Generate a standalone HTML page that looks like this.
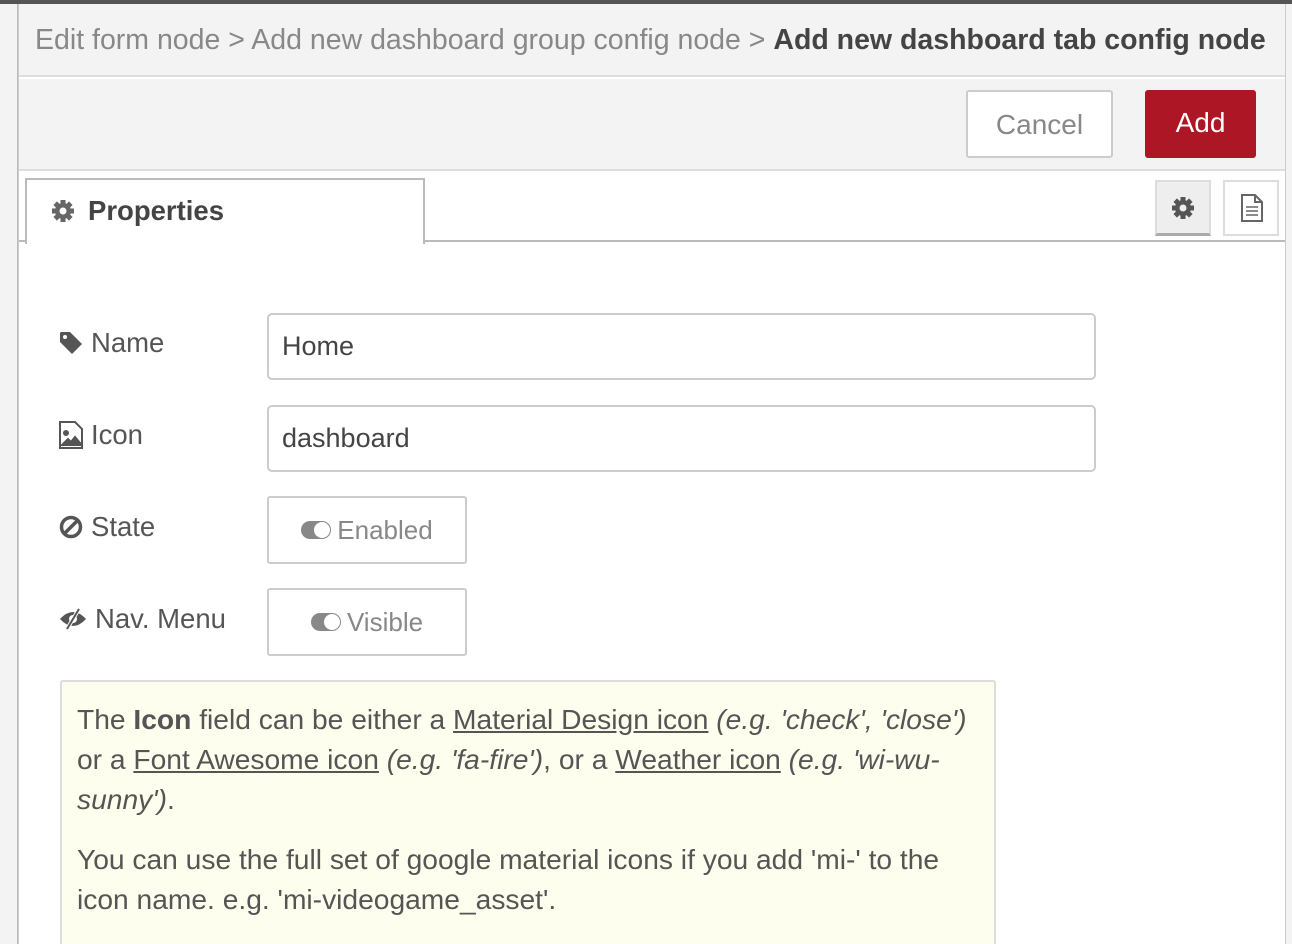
<!DOCTYPE html>
<html><head><style>
*{box-sizing:border-box;margin:0;padding:0}
html,body{width:1292px;height:944px;overflow:hidden}
body{background:#c8c8c8;font-family:"Liberation Sans",Arial,sans-serif;position:relative;color:#555}
.top{position:absolute;left:0;top:0;width:1292px;height:4px;background:#555}
.leftstrip{position:absolute;left:0;top:4px;width:18px;height:940px;background:#f3f3f3;border-right:1px solid #bbb}
.panel{position:absolute;left:18px;top:4px;width:1268px;height:940px;background:#fff;border-left:1px solid #ccc;border-right:1px solid #ccc;overflow:hidden}
.rightstrip{position:absolute;left:1286px;top:4px;width:6px;height:940px;background:#f3f3f3}
.crumb{position:absolute;left:0;top:0;width:100%;height:73px;background:#f3f3f3;border-bottom:2px solid #ddd;font-size:28.5px;line-height:73px;padding-left:16px;color:#888;white-space:nowrap}
.crumb b{color:#444}
.btnbar{position:absolute;left:0;top:75px;width:100%;height:92px;background:#f3f3f3;border-bottom:2px solid #ddd}
.btn{position:absolute;top:11px;height:68px;font-size:28px;line-height:66px;text-align:center;border-radius:3px}
.cancel{left:947px;width:147px;background:#fff;border:2px solid #ccc;color:#888}
.add{left:1126px;width:111px;background:#ad1625;color:#fff}
.tabs{position:absolute;left:0;top:169px;width:100%;height:69px;border-bottom:2px solid #bbb}
.tab{position:absolute;left:6px;top:5px;width:400px;height:66px;background:#fff;border:2px solid #bbb;border-bottom:none;font-size:27.5px;font-weight:bold;color:#444;line-height:62px;padding-left:24px}
.ib{position:absolute;top:7px;width:56px;height:56px;border:2px solid #ddd;background:#fff}
.lbl{position:absolute;left:40px;font-size:27.5px;color:#555;display:flex;align-items:center;gap:8px}
.inp{position:absolute;left:248px;width:829px;height:67px;border:2px solid #ccc;border-radius:5px;font-size:27px;color:#444;line-height:63px;padding-left:13px}
.tog{position:absolute;left:248px;width:200px;height:68px;border:2px solid #ccc;border-radius:3px;font-size:26px;color:#888;display:flex;align-items:center;justify-content:center;gap:6px}
.sw{width:30px;height:18px;border-radius:9px;background:#888;position:relative}
.sw:after{content:"";position:absolute;right:1px;top:1px;width:16px;height:16px;border-radius:50%;background:#fff}
.help{position:absolute;left:41px;top:676px;width:936px;height:300px;background:#fefeee;border:2px solid #ddd;border-radius:3px;padding:17px 15px;font-size:28.2px;line-height:40px;color:#555}
.help p{margin-bottom:20px}
</style></head><body>
<div class="top"></div>
<div class="leftstrip"></div>
<div class="rightstrip"></div>
<div class="panel">
<div class="crumb">Edit form node &gt; Add new dashboard group config node &gt; <b>Add new dashboard tab config node</b></div>
<div class="btnbar"><div class="btn cancel">Cancel</div><div class="btn add">Add</div></div>
<div class="tabs">
<div class="tab"><svg width="24" height="24" viewBox="0 0 24 24" style="position:absolute;left:24px;top:19px"><g fill="#666"><circle cx="12" cy="12" r="8"/><g stroke="#666" stroke-width="5"><line x1="12" y1="1" x2="12" y2="23"/><line x1="1" y1="12" x2="23" y2="12"/><line x1="4.2" y1="4.2" x2="19.8" y2="19.8"/><line x1="19.8" y1="4.2" x2="4.2" y2="19.8"/></g><circle cx="12" cy="12" r="3.5" fill="#fff"/></g></svg><span style="margin-left:37px">Properties</span></div>
<div class="ib" style="left:1136px;background:#eee;border-bottom:3px solid #aaa"><svg width="24" height="24" viewBox="0 0 24 24" style="position:absolute;left:14px;top:14px"><g fill="#555"><circle cx="12" cy="12" r="8"/><g stroke="#555" stroke-width="5"><line x1="12" y1="1" x2="12" y2="23"/><line x1="1" y1="12" x2="23" y2="12"/><line x1="4.2" y1="4.2" x2="19.8" y2="19.8"/><line x1="19.8" y1="4.2" x2="4.2" y2="19.8"/></g><circle cx="12" cy="12" r="3.5" fill="#eee"/></g></svg></div>
<div class="ib" style="left:1204px"><svg width="24" height="28" viewBox="0 0 24 28" style="position:absolute;left:15px;top:12px" fill="none" stroke="#666" stroke-width="2"><path d="M2 1h13l7 7v19H2z M15 1v7h7"/><path d="M6 13h12M6 17h12M6 21h12" stroke-width="1.6"/></svg></div>
</div>
<div class="lbl" style="top:323px"><svg width="24" height="24" viewBox="0 0 24 24"><path d="M1 2v9l12 12 10-10L11 1H2z" fill="#555"/><circle cx="6" cy="6" r="2" fill="#fff"/></svg>Name</div>
<div class="inp" style="top:309px">Home</div>
<div class="lbl" style="top:415px"><svg width="24" height="28" viewBox="0 0 24 28" fill="none" stroke="#555" stroke-width="2"><path d="M1 1h15l7 7v19H1z"/><circle cx="7" cy="12" r="2" fill="#555"/><path d="M3 24l6-6 3 3 4-5 5 6v2H3z" fill="#555"/></svg>Icon</div>
<div class="inp" style="top:401px">dashboard</div>
<div class="lbl" style="top:507px"><svg width="24" height="24" viewBox="0 0 24 24" fill="none" stroke="#555" stroke-width="3.5"><circle cx="12" cy="12" r="9.5"/><line x1="5" y1="19" x2="19" y2="5"/></svg>State</div>
<div class="tog" style="top:492px"><span class="sw"></span>Enabled</div>
<div class="lbl" style="top:599px"><svg width="28" height="24" viewBox="0 0 28 24"><path d="M1 12Q14 -2 27 12Q14 26 1 12z" fill="#555"/><circle cx="14" cy="12" r="4" fill="#fff"/><line x1="8" y1="22" x2="20" y2="2" stroke="#fff" stroke-width="4"/><line x1="8" y1="22" x2="20" y2="2" stroke="#555" stroke-width="2"/></svg>Nav. Menu</div>
<div class="tog" style="top:584px"><span class="sw"></span>Visible</div>
<div class="help"><p>The <b>Icon</b> field can be either a <u>Material Design icon</u> <i>(e.g. 'check', 'close')</i> or a <u>Font Awesome icon</u> <i>(e.g. 'fa-fire')</i>, or a <u>Weather icon</u> <i>(e.g. 'wi-wu-sunny')</i>.</p><p>You can use the full set of google material icons if you add 'mi-' to the icon name. e.g. 'mi-videogame_asset'.</p></div>
</div>
</body></html>
